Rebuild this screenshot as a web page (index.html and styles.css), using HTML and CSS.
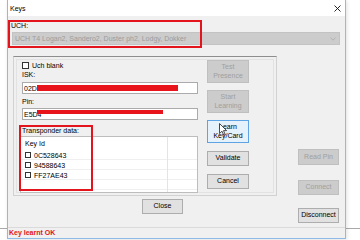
FILE: index.html
```html
<!DOCTYPE html>
<html>
<head>
<meta charset="utf-8">
<link rel="stylesheet" href="styles.css">
</head>
<body>
<div class="window">
  <div class="titlebar">
    <span class="title">Keys</span>
    <svg class="close-x" width="7" height="7" viewBox="0 0 7 7"><path d="M0.5 0.5L6.5 6.5M6.5 0.5L0.5 6.5" stroke="#111" stroke-width="0.9" fill="none"/></svg>
  </div>
  <div class="client">
    <div class="uch-label">UCH:</div>
    <div class="combo">
      <span>UCH T4 Logan2, Sandero2, Duster ph2, Lodgy, Dokker</span>
      <svg width="6" height="4" viewBox="0 0 6 4"><path d="M0.5 0.8L3 3.2L5.5 0.8" stroke="#a9a9a9" stroke-width="0.8" fill="none"/></svg>
    </div>
    <div class="mark mark-uch"></div>

    <div class="main">
      <div class="left-col">
        <div class="group">
          <div class="fields">
            <div class="check-row"><span class="cb"></span><span>Uch blank</span></div>
            <div class="label">ISK:</div>
            <div class="input"><span>02D</span><span class="redact redact-isk"></span></div>
            <div class="label label-pin">Pin:</div>
            <div class="input input-pin"><span>E5D4</span><span class="redact redact-pin"></span></div>
            <div class="label label-tr">Transponder data:</div>
            <div class="listview">
              <div class="lv-head">Key Id</div>
              <div class="lv-row"><span class="cb cb-sm"></span><span>0C528643</span></div>
              <div class="lv-row"><span class="cb cb-sm"></span><span>94588643</span></div>
              <div class="lv-row"><span class="cb cb-sm"></span><span>FF27AE43</span></div>
            </div>
          </div>
          <div class="btn-col">
            <div class="btn tall disabled">Test<br>Presence</div>
            <div class="btn tall disabled gap7">Start<br>Learning</div>
            <div class="btn tall focus gap7">Learn<br>Key/Card
              <svg class="cursor" width="8" height="13" viewBox="0 0 8 13"><path d="M0.5 0.5L0.5 10.5L3 8.2L4.8 12.2L6.2 11.6L4.5 7.6L7.6 7.6Z" fill="#fff" stroke="#222" stroke-width="0.8"/></svg>
            </div>
            <div class="btn gap8">Validate</div>
            <div class="btn gap8">Cancel</div>
          </div>
          <div class="mark mark-tr"></div>
        </div>
        <div class="btn close-btn">Close</div>
      </div>
      <div class="side">
        <div class="btn disabled readpin">Read Pin</div>
        <div class="btn disabled connect">Connect</div>
        <div class="btn disconnect">Disconnect</div>
      </div>
    </div>

    <div class="status">Key learnt OK</div>
  </div>
</div>
</body>
</html>
```
FILE: styles.css
```css
html, body {
  margin: 0;
  padding: 0;
}
body {
  width: 360px;
  height: 240px;
  overflow: hidden;
  background: linear-gradient(to bottom, transparent 228px, #a9a9a9 228px, #a9a9a9 229px, transparent 229px), #ffffff;
  font-family: "Liberation Sans", Arial, sans-serif;
  font-size: 7px;
  line-height: 9px;
  color: #000;
}
.window {
  margin-left: 7px;
  width: 339px;
  height: 239px;
  box-sizing: border-box;
  border: 1px solid #8fb9e7;
  border-top: 0;
  display: flex;
  flex-direction: column;
  background: #f0f0f0;
  box-shadow: 1px 1px 4px rgba(0, 0, 0, 0.12);
}
.titlebar {
  height: 16px;
  flex: none;
  background: #ffffff;
  display: flex;
  align-items: center;
  justify-content: space-between;
  padding: 0 4px 0 2px;
}
.close-x {
  display: block;
}
.client {
  flex: 1;
  position: relative;
  display: flex;
  flex-direction: column;
}
.uch-label {
  margin: 5px 0 0 3px;
  height: 9px;
}
.combo {
  margin: 2px 0 0 4px;
  width: 328px;
  height: 13px;
  box-sizing: border-box;
  border: 1px solid #c3c3c3;
  background: #cccccc;
  color: #9c9c9c;
  display: flex;
  align-items: center;
  justify-content: space-between;
  padding: 0 3px 0 2px;
}
.combo svg {
  display: block;
}
.mark {
  position: absolute;
  box-sizing: border-box;
  border: 2px solid #e3141c;
}
.mark-uch {
  left: 0;
  top: 4px;
  width: 194px;
  height: 28px;
}
.main {
  margin-top: 11px;
  display: flex;
  padding-left: 5px;
}
.left-col {
  width: 264px;
  display: flex;
  flex-direction: column;
}
.group {
  position: relative;
  height: 140px;
  box-sizing: border-box;
  border: 1px solid #d2d2d2;
  border-top-color: #8e8e8e;
  box-shadow: inset 0 0 0 2px #f0f0f0, inset 0 0 0 3px #e2e2e2;
  display: flex;
  padding-left: 8px;
}
.fields {
  width: 176px;
  padding-top: 4px;
  display: flex;
  flex-direction: column;
}
.check-row {
  height: 9px;
  display: flex;
  align-items: center;
}
.cb {
  display: inline-block;
  width: 7px;
  height: 7px;
  box-sizing: border-box;
  border: 1px solid #333;
  background: #fff;
  margin-right: 3px;
}
.cb-sm {
  width: 6px;
  height: 6px;
}
.label {
  height: 9px;
}
.input {
  margin-top: 3px;
  height: 12px;
  box-sizing: border-box;
  border: 1px solid #ababab;
  background: #fff;
  padding-left: 1px;
  display: flex;
  align-items: center;
}
.label-pin {
  margin-top: 3px;
}
.input-pin {
  margin-top: 2px;
}
.label-tr {
  margin-top: 6px;
}
.redact {
  display: inline-block;
  background: #e8141c;
}
.redact-isk {
  width: 141px;
  height: 6px;
  margin-left: 0;
}
.redact-pin {
  align-self: flex-start;
  width: 126px;
  height: 4px;
  margin-left: -5px;
  margin-top: 1px;
}
.listview {
  margin-top: 1px;
  margin-left: -2px;
  width: 178px;
  height: 57px;
  box-sizing: border-box;
  border: 1px solid #bdbdbd;
  background:
    linear-gradient(to right, transparent 146px, #e4e4e4 146px, #e4e4e4 147px, transparent 147px),
    repeating-linear-gradient(to bottom, #ffffff 0, #ffffff 9px, #efefef 9px, #efefef 10px) 0 13px / 100% 100% no-repeat,
    #ffffff;
}
.lv-head {
  height: 13px;
  padding-left: 4px;
  display: flex;
  align-items: center;
}
.lv-row {
  height: 10px;
  padding-left: 4px;
  display: flex;
  align-items: center;
}
.btn-col {
  margin-left: 9px;
  width: 42px;
  padding-top: 3px;
  display: flex;
  flex-direction: column;
}
.btn {
  position: relative;
  box-sizing: border-box;
  height: 15px;
  border: 1px solid #adadad;
  background: #e1e1e1;
  color: #000;
  display: flex;
  align-items: center;
  justify-content: center;
  text-align: center;
  line-height: 8.5px;
}
.btn.tall {
  height: 23px;
}
.btn.disabled {
  background: #cccccc;
  border-color: #bfbfbf;
  color: #a0a0a0;
}
.btn.focus {
  background: #e5f1fb;
  border-color: #5ea4e4;
}
.gap7 {
  margin-top: 7px;
}
.gap8 {
  margin-top: 8px;
}
.cursor {
  position: absolute;
  left: 11px;
  top: 2px;
}
.mark-tr {
  left: 5px;
  top: 68px;
  width: 74px;
  height: 66px;
}
.close-btn {
  margin: 3px 0 0 129px;
  width: 41px;
}
.side {
  margin-left: 21px;
  width: 41px;
  display: flex;
  flex-direction: column;
}
.readpin {
  margin-top: 93px;
  height: 16px;
}
.connect {
  margin-top: 15px;
}
.disconnect {
  margin-top: 13px;
}
.status {
  margin-top: 4px;
  height: 11px;
  box-sizing: border-box;
  border-top: 1px solid #dadada;
  padding-left: 1px;
  color: #e3141c;
  font-weight: bold;
  line-height: 9px;
}
```
